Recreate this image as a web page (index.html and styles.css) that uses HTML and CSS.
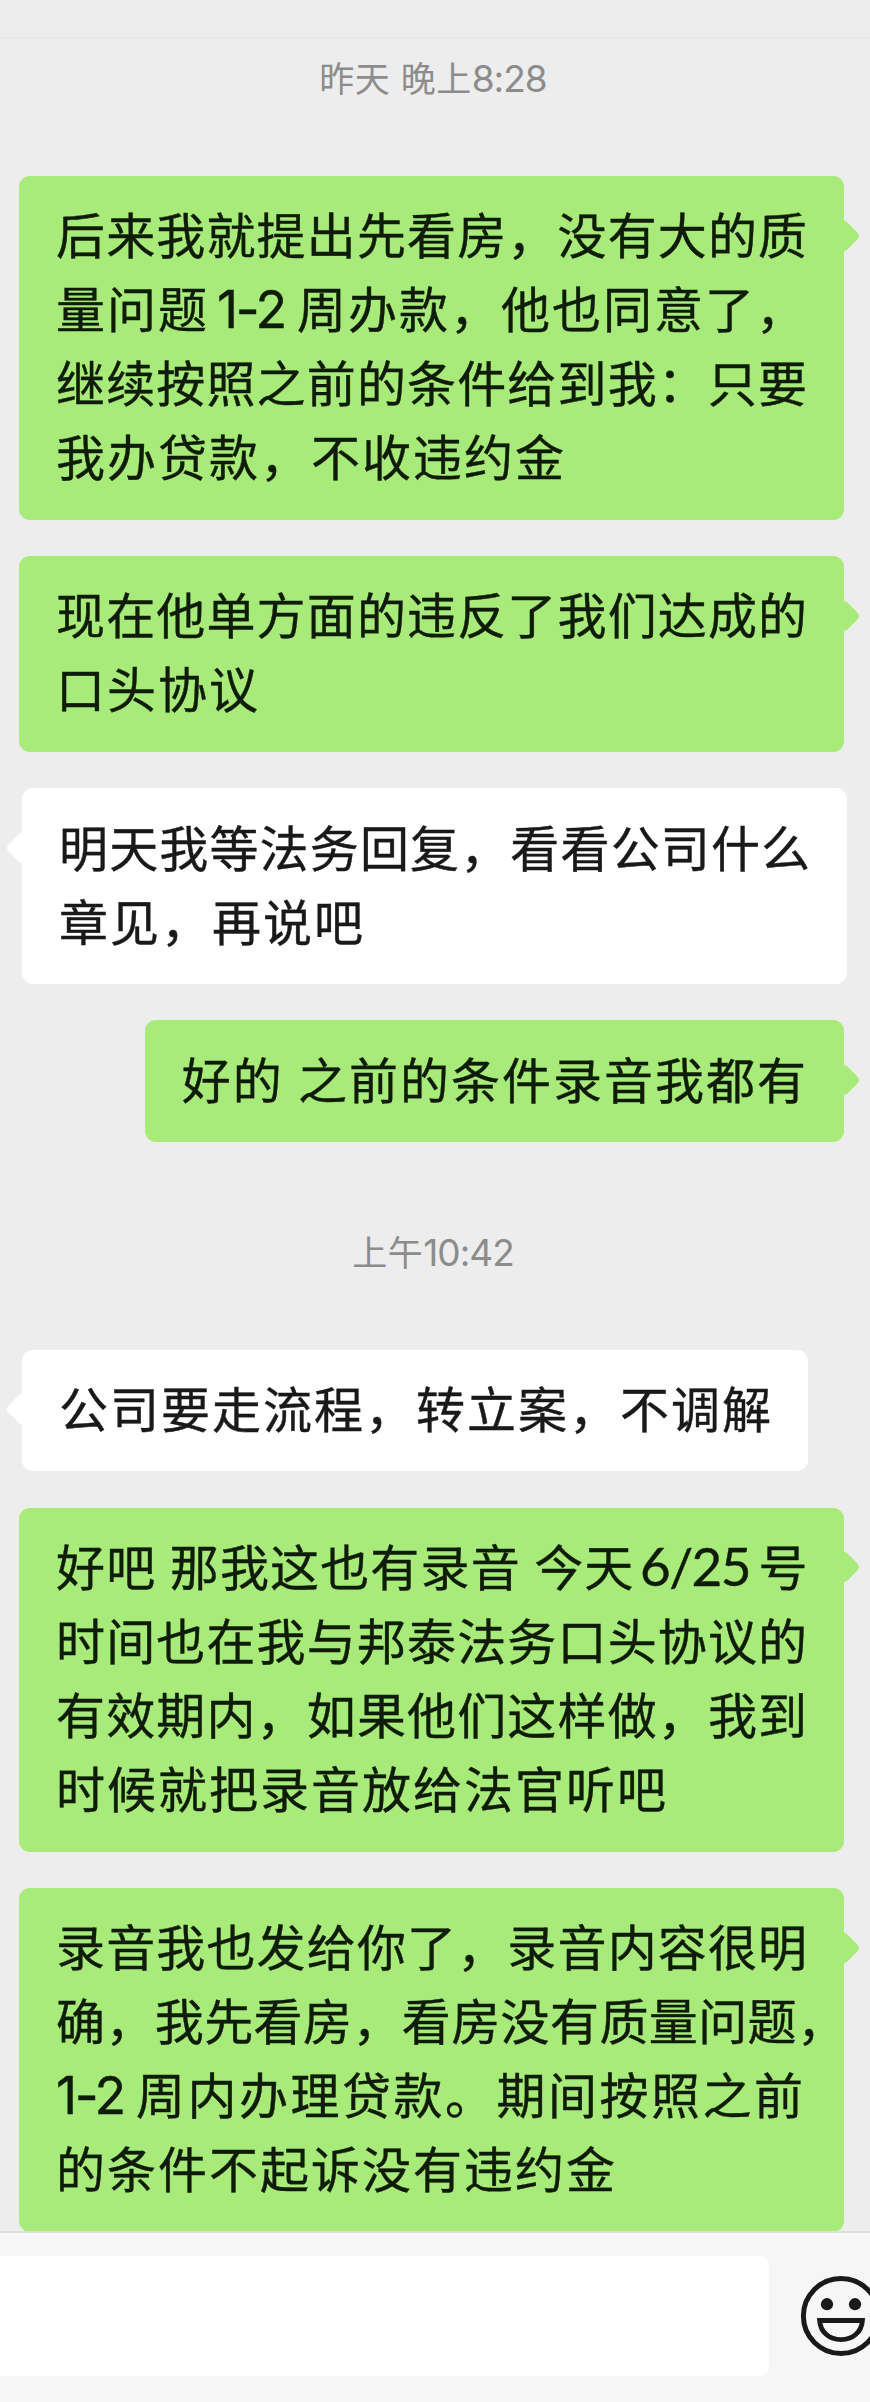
FILE: index.html
```html
<!DOCTYPE html>
<html lang="zh-CN">
<head>
  <meta charset="UTF-8" />
  <meta name="viewport" content="width=device-width, initial-scale=1.0">
  <title>聊天</title>
  <link rel="stylesheet" href="styles.css">
</head>
<body>
  <div class="topbar"></div>

  <div class="chat">
    <div class="time first">昨天 晚上<span class="clock">8:28</span></div>

    <div class="bubble me">
      <p class="full">后来我就提出先看房，没有大的质</p>
      <p>量问题<span class="num range">1-2</span>周办款，他也同意了，</p>
      <p class="full">继续按照之前的条件给到我：只要</p>
      <p>我办贷款，不收违约金</p>
    </div>

    <div class="bubble me">
      <p class="full">现在他单方面的违反了我们达成的</p>
      <p>口头协议</p>
    </div>

    <div class="bubble other">
      <p class="full">明天我等法务回复，看看公司什么</p>
      <p>章见，再说吧</p>
    </div>

    <div class="bubble me">
      <p>好的 之前的条件录音我都有</p>
    </div>

    <div class="time">上午<span class="clock">10:42</span></div>

    <div class="bubble other">
      <p>公司要走流程，转立案，不调解</p>
    </div>

    <div class="bubble me">
      <p class="full">好吧 那我这也有录音 今天<span class="num date">6/25</span>号</p>
      <p class="full">时间也在我与邦泰法务口头协议的</p>
      <p class="full">有效期内，如果他们这样做，我到</p>
      <p>时候就把录音放给法官听吧</p>
    </div>

    <div class="bubble me">
      <p class="full">录音我也发给你了，录音内容很明</p>
      <p class="tight">确，我先看房，看房没有质量问题，</p>
      <p class="loose"><span class="num range start">1-2</span>周内办理贷款。期间按照之前</p>
      <p>的条件不起诉没有违约金</p>
    </div>
  </div>

  <footer class="inputbar">
    <div class="field"></div>
    <svg class="emoji" width="82" height="82" viewBox="0 0 82 82">
      <circle cx="41" cy="41" r="37.6" fill="none" stroke="#191919" stroke-width="5" />
      <circle cx="27" cy="29.2" r="6.1" fill="#191919" />
      <circle cx="55" cy="29.2" r="6.1" fill="#191919" />
      <path d="M19.6 45.5H62.4C61.6 57.5 52.5 64.6 41 64.6S20.4 57.5 19.6 45.5Z" fill="none" stroke="#191919" stroke-width="4.8" />
    </svg>
  </footer>
</body>
</html>
```

FILE: styles.css
```css
* {
  box-sizing: border-box;
}

body {
  margin: 0;
  width: 870px;
  height: 2402px;
  display: flex;
  flex-direction: column;
  overflow: hidden;
  background-color: #ededed;
  font-family: Inter, "Noto Sans CJK SC", sans-serif;
}

.topbar {
  height: 39px;
  flex: none;
  border-bottom: 2px solid #e6e6e6;
}

.chat {
  flex: 1;
  min-height: 0;
  overflow: hidden;
  display: flex;
  flex-direction: column;
  gap: 36.5px;
  padding: 15px 26px 0 19px;
}

.time {
  flex: none;
  height: 135.1px;
  padding: 50px 0 0 3px;
  text-align: center;
  font-size: 35px;
  line-height: 50px;
  letter-spacing: 0.5px;
  color: #8c8c8c;
}

.time.first {
  height: 85.5px;
  padding-top: 0;
}

.clock {
  font-size: 37px;
  letter-spacing: -1px;
}

.bubble {
  position: relative;
  flex: none;
  padding: 24.4px 36px 23.2px 37px;
  border-radius: 11px;
  font-size: 49px;
  line-height: 74px;
  -webkit-text-stroke: 0.4px currentColor;
}

.bubble p {
  margin: 0;
  height: 74px;
  white-space: nowrap;
  letter-spacing: 2px;
  word-spacing: -1.5px;
}

.bubble p.full {
  letter-spacing: 1.15px;
}

.bubble p.tight {
  letter-spacing: 0.4px;
}

.bubble p.loose {
  letter-spacing: 2.5px;
}

.me {
  align-self: flex-end;
  background-color: #a9eb7a;
  color: #0e1c08;
}

.other {
  align-self: flex-start;
  margin-left: 3px;
  background-color: #fff;
  color: #191919;
}

.other:not(:has(.full)) {
  padding-right: 35px;
}

/* full-width bubbles keep a fixed size */
.bubble:has(.full) {
  width: 825px;
}

/* small arrow on the side of the bubble */
.bubble::after {
  content: "";
  position: absolute;
  top: 47.5px;
  width: 24px;
  height: 24px;
  border-radius: 5px;
  background-color: inherit;
  transform: rotate(45deg);
}

.me::after {
  right: -12px;
}

.other::after {
  left: -12px;
}

.num {
  display: inline-block;
  text-align: center;
  font-size: 52px;
  line-height: 60px;
  letter-spacing: -2.4px;
}

.range {
  width: 88px;
  padding-right: 4px;
}

.range.start {
  width: 80px;
  padding-right: 0;
  text-align: left;
}

.date {
  width: 124px;
  padding-right: 3px;
  font-family: Lato, Inter, sans-serif;
  font-size: 53px;
  letter-spacing: -1.5px;
}

.inputbar {
  flex: none;
  height: 171px;
  display: flex;
  align-items: flex-start;
  background-color: #f6f6f6;
  border-top: 2px solid #dedede;
}

.field {
  flex: none;
  width: 769px;
  height: 120px;
  margin-top: 23px;
  border-radius: 0 9px 9px 0;
  background-color: #fff;
}

.emoji {
  flex: none;
  margin: 41.5px 0 0 31px;
}
```
